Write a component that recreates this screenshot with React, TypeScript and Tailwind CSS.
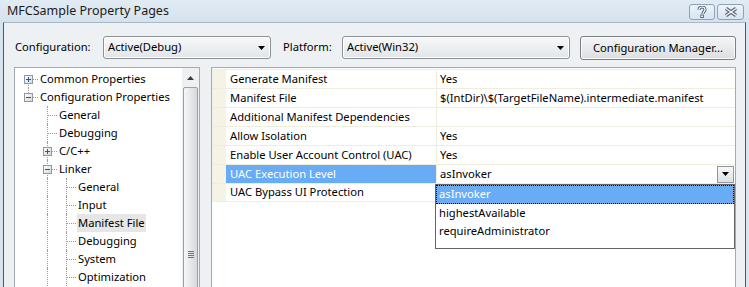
import React from 'react';

type TreeItem = {
  label: string;
  guides: boolean[];
  conn: 'full' | 'top' | 'bottom';
  box?: 'plus' | 'minus';
  selected?: boolean;
};

const treeItems: TreeItem[] = [
  { label: 'Common Properties', guides: [], conn: 'bottom', box: 'plus' },
  { label: 'Configuration Properties', guides: [], conn: 'top', box: 'minus' },
  { label: 'General', guides: [false], conn: 'full' },
  { label: 'Debugging', guides: [false], conn: 'full' },
  { label: 'C/C++', guides: [false], conn: 'full', box: 'plus' },
  { label: 'Linker', guides: [false], conn: 'full', box: 'minus' },
  { label: 'General', guides: [false, true], conn: 'full' },
  { label: 'Input', guides: [false, true], conn: 'full' },
  { label: 'Manifest File', guides: [false, true], conn: 'full', selected: true },
  { label: 'Debugging', guides: [false, true], conn: 'full' },
  { label: 'System', guides: [false, true], conn: 'full' },
  { label: 'Optimization', guides: [false, true], conn: 'full' },
];

const props: { name: string; value: string; selected?: boolean }[] = [
  { name: 'Generate Manifest', value: 'Yes' },
  { name: 'Manifest File', value: '$(IntDir)\\$(TargetFileName).intermediate.manifest' },
  { name: 'Additional Manifest Dependencies', value: '' },
  { name: 'Allow Isolation', value: 'Yes' },
  { name: 'Enable User Account Control (UAC)', value: 'Yes' },
  { name: 'UAC Execution Level', value: 'asInvoker', selected: true },
  { name: 'UAC Bypass UI Protection', value: '' },
];

function ExpandBox({ open }: { open: boolean }) {
  return (
    <svg width="9" height="9" viewBox="0 0 9 9" className="block">
      <defs>
        <linearGradient id="expbox" x1="0" y1="0" x2="1" y2="1">
          <stop offset="0" stopColor="#ffffff" />
          <stop offset="1" stopColor="#d2d6da" />
        </linearGradient>
      </defs>
      <rect x="0.5" y="0.5" width="8" height="8" fill="url(#expbox)" stroke="#8f979f" />
      <path d="M2 4.5h5" stroke="#2a50c8" />
      {!open && <path d="M4.5 2v5" stroke="#2a50c8" />}
    </svg>
  );
}

function DownArrow() {
  return (
    <svg width="7" height="4" viewBox="0 0 7 4" className="block">
      <path d="M0 0h7L3.5 4z" fill="#000" />
    </svg>
  );
}

function Combo({ value, width }: { value: string; width: string }) {
  return (
    <div
      className={`${width} h-[23px] rounded-[3px] border border-[#8d9196] bg-gradient-to-b from-[#f7f8f9] to-[#e2e5e8] flex items-center justify-between pl-[4px] pr-[5px] shadow-[inset_0_0_0_1px_#ffffff]`}
    >
      <span>{value}</span>
      <DownArrow />
    </div>
  );
}

function TreeRow({ item }: { item: TreeItem }) {
  return (
    <div className="flex h-[18px] items-stretch">
      {item.guides.map((g, i) => (
        <div key={i} className="w-[19px] flex justify-center">
          {g && <div className="w-0 h-full border-l border-dotted border-[#9a9a9a]" />}
        </div>
      ))}
      <div className="w-[19px] relative">
        {item.conn === 'full' && (
          <div className="absolute left-[9px] top-0 bottom-0 border-l border-dotted border-[#9a9a9a]" />
        )}
        {item.conn === 'top' && (
          <div className="absolute left-[9px] top-0 h-[9px] border-l border-dotted border-[#9a9a9a]" />
        )}
        {item.conn === 'bottom' && (
          <div className="absolute left-[9px] top-[9px] bottom-0 border-l border-dotted border-[#9a9a9a]" />
        )}
        <div className="absolute left-[10px] right-0 top-[9px] border-t border-dotted border-[#9a9a9a]" />
        {item.box && (
          <div className="absolute left-[5px] top-[5px]">
            <ExpandBox open={item.box === 'minus'} />
          </div>
        )}
      </div>
      <div
        className={`ml-[1px] px-[1px] flex items-center whitespace-nowrap ${item.selected ? 'bg-[#e6e6e6]' : ''}`}
      >
        {item.label}
      </div>
    </div>
  );
}

export default function App() {
  return (
    <div className="w-[749px] h-[287px] overflow-hidden bg-[#d7e3ee] flex flex-col font-['Noto_Sans',sans-serif] text-[11.2px] text-black">
      {/* title bar */}
      <div className="h-[22px] shrink-0 flex items-center justify-between pl-[7px] pr-[5px] bg-gradient-to-b from-[#e2ebf4] to-[#d5e2ee]">
        <span className="text-[12.5px] text-[#1b1b1b] leading-none">MFCSample Property Pages</span>
        <div className="flex gap-[2px] self-start mt-[4px]">
          <div className="w-[26px] h-[16px] rounded-[3px] border border-[#8ea2b8] bg-gradient-to-b from-[#edf3f9] to-[#d9e4ef] flex items-center justify-center">
            <svg width="10" height="12" viewBox="0 0 10 12">
              <path
                d="M2 4c0-2 1.5-3 3-3s3 1 3 2.8c0 1.6-2 2-2 3.7V8"
                fill="none"
                stroke="#4c5d72"
                strokeWidth="3"
              />
              <path
                d="M2 4c0-2 1.5-3 3-3s3 1 3 2.8c0 1.6-2 2-2 3.7V8"
                fill="none"
                stroke="#ffffff"
                strokeWidth="1.2"
              />
              <rect x="3.8" y="9" width="2.6" height="2.6" fill="#ffffff" stroke="#4c5d72" strokeWidth="0.9" />
            </svg>
          </div>
          <div className="w-[27px] h-[16px] rounded-[3px] border border-[#8ea2b8] bg-gradient-to-b from-[#edf3f9] to-[#d9e4ef] flex items-center justify-center">
            <svg width="14" height="10" viewBox="0 0 14 10">
              <path d="M2 1.5l10 7M12 1.5l-10 7" stroke="#4c5d72" strokeWidth="3.4" />
              <path d="M2 1.5l10 7M12 1.5l-10 7" stroke="#ffffff" strokeWidth="1.4" />
            </svg>
          </div>
        </div>
      </div>

      {/* client area */}
      <div className="flex-1 mx-[3px] border-l border-r border-t border-[#4d5a68] border-t-[#a9b8c6] bg-[#edf1f4] pt-[13px] pl-[10px] overflow-hidden">
        <div className="flex items-start h-[24px]">
          <div className="w-[89px] h-[23px] flex items-center pl-[1px]">Configuration:</div>
          <Combo value="Active(Debug)" width="w-[168px]" />
          <div className="ml-[12px] w-[59px] h-[23px] flex items-center">Platform:</div>
          <Combo value="Active(Win32)" width="w-[228px]" />
          <div className="ml-[10px] w-[156px] h-[24px] rounded-[3px] border border-[#7b7f84] bg-gradient-to-b from-[#f4f5f6] to-[#dcdfe2] shadow-[inset_0_0_0_1px_#fbfbfb] flex items-center justify-center">
            Configuration Manager...
          </div>
        </div>

        <div className="flex mt-[7px] h-[240px]">
          {/* tree */}
          <div className="w-[186px] h-full border border-[#a3aab2] bg-white flex">
            <div className="flex-1 pt-[2px] pl-[4px] overflow-hidden">
              {treeItems.map((it, i) => (
                <TreeRow key={i} item={it} />
              ))}
            </div>
            <div className="w-[17px] bg-[#eef0f2] flex flex-col items-center overflow-hidden">
              <div className="h-[19px] w-full shrink-0 flex items-center justify-center">
                <svg width="7" height="4" viewBox="0 0 7 4" className="block">
                  <path d="M0 4h7L3.5 0z" fill="#3a3a3a" />
                </svg>
              </div>
              <div className="w-[15px] h-[330px] shrink-0 rounded-[2px] border border-[#9aa0a6] bg-gradient-to-r from-[#f6f7f8] to-[#d6d9dc] flex flex-col items-center pt-[163px] gap-[1px]">
                <div className="w-[6px] h-[1px] bg-[#6f747a]" />
                <div className="w-[6px] h-[1px] bg-[#6f747a]" />
                <div className="w-[6px] h-[1px] bg-[#6f747a]" />
                <div className="w-[6px] h-[1px] bg-[#6f747a]" />
              </div>
            </div>
          </div>

          {/* property grid */}
          <div className="ml-[11px] w-[525px] h-full border border-[#a3aab2] bg-white relative">
            <div className="pt-[1px]">
              {props.map((p, i) => (
                <div
                  key={i}
                  className={`flex h-[19px] border-t border-[#efeedd] ${i === props.length - 1 ? 'border-b' : ''}`}
                >
                  <div className="w-[14px] bg-[#f4f3e5]" />
                  <div
                    className={`w-[211px] border-r border-[#efeedd] pl-[4px] flex items-center whitespace-nowrap ${
                      p.selected ? 'bg-[#68acf5] text-white' : ''
                    }`}
                  >
                    {p.name}
                  </div>
                  <div className="flex-1 pl-[3px] flex items-center justify-between">
                    <span className="whitespace-nowrap">{p.value}</span>
                    {p.selected && (
                      <div className="w-[17px] h-[17px] mr-[1px] border border-[#8f969d] bg-gradient-to-b from-[#f7f8f9] to-[#dde1e5] flex items-center justify-center">
                        <DownArrow />
                      </div>
                    )}
                  </div>
                </div>
              ))}
            </div>

            {/* open dropdown list */}
            <div className="absolute left-[223px] top-[116px] w-[300px] h-[65px] border border-[#646464] bg-white">
              <div className="h-[19px] bg-[#68acf5] text-white border border-dotted border-black pl-[2px] flex items-center">
                asInvoker
              </div>
              <div className="h-[18px] pl-[3px] flex items-center">highestAvailable</div>
              <div className="h-[18px] pl-[3px] flex items-center">requireAdministrator</div>
            </div>
          </div>
        </div>
      </div>
    </div>
  );
}
